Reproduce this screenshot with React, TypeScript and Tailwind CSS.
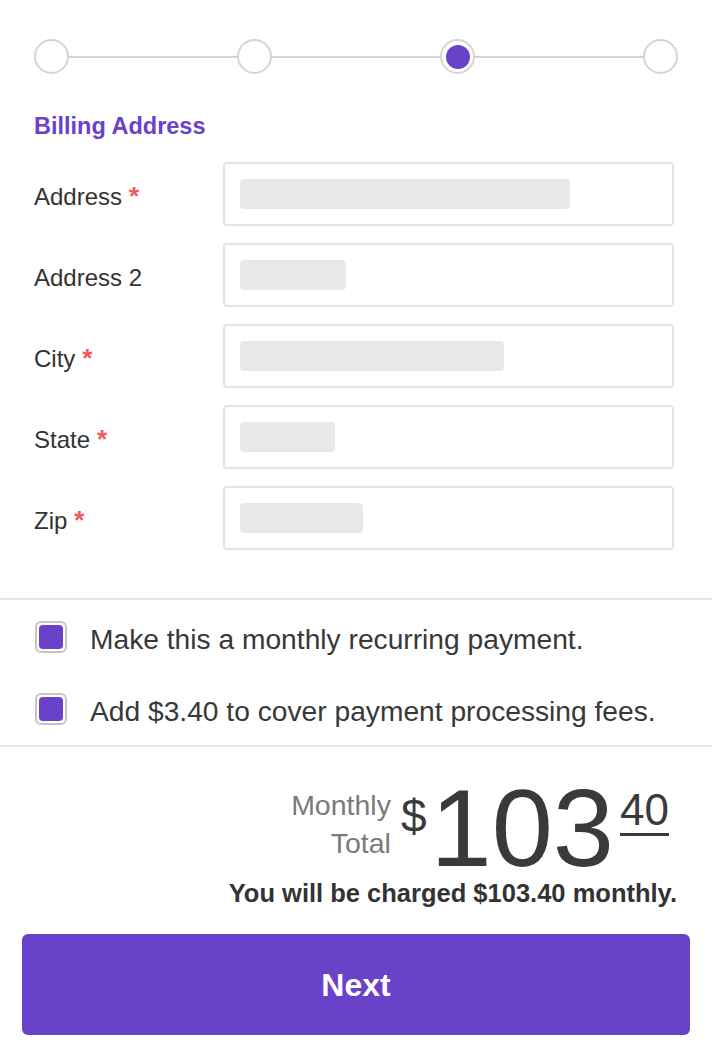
import React from 'react';

const fields = [
  { label: 'Address', required: true, bar: 'w-[330px]' },
  { label: 'Address 2', required: false, bar: 'w-[106px]' },
  { label: 'City', required: true, bar: 'w-[264px]' },
  { label: 'State', required: true, bar: 'w-[95px]' },
  { label: 'Zip', required: true, bar: 'w-[123px]' },
];

const options = [
  'Make this a monthly recurring payment.',
  'Add $3.40 to cover payment processing fees.',
];

function Step({ active }: { active?: boolean }) {
  return (
    <div className="w-[35px] h-[35px] rounded-full border-2 border-[#d4d4d4] flex items-center justify-center shrink-0 bg-white">
      {active && <div className="w-[24px] h-[24px] rounded-full bg-[#6a41c9]" />}
    </div>
  );
}

function Line() {
  return <div className="flex-1 h-[2px] bg-[#d4d4d4]" />;
}

export default function App() {
  return (
    <div className="w-full min-h-[1059px] bg-white text-[#333] font-['Liberation_Sans',Arial,sans-serif]">
      {/* STEPPER */}
      <div className="pt-[39px] px-[34px] flex items-center">
        <Step />
        <Line />
        <Step />
        <Line />
        <Step active />
        <Line />
        <Step />
      </div>

      {/* BILLING ADDRESS FORM */}
      <div className="pl-[34px] pr-[38px]">
        <h2 className="mt-[38px] text-[23.5px] leading-[28px] font-bold text-[#6a41c9]">Billing Address</h2>
        <div className="mt-[22px] flex flex-col gap-[17px]">
          {fields.map((f) => (
            <div key={f.label} className="flex items-center">
              <div className="w-[189px] shrink-0 mt-[6px] text-[24px] leading-[30px] flex items-start">
                <span>{f.label}</span>
                {f.required && (
                  <span className="ml-[7px] mt-[2px] text-[26px] leading-[24px] font-bold text-[#ef5a5c]">*</span>
                )}
              </div>
              <div className="flex-1 h-[64px] border-2 border-[#e4e4e4] rounded-[4px] flex items-center pl-[15px]">
                <div className={`${f.bar} h-[30px] rounded-[4px] bg-[#e8e8e8]`} />
              </div>
            </div>
          ))}
        </div>
      </div>

      {/* OPTIONS */}
      <div className="mt-[48px] border-t-2 border-b-2 border-[#e6e6e6] pt-[1px]">
        {options.map((o) => (
          <div key={o} className="h-[72px] flex items-center pl-[35px]">
            <div className="w-[32px] h-[32px] shrink-0 rounded-[6px] border-2 border-[#c6c6c6] p-[2px]">
              <div className="w-full h-full rounded-[4px] bg-[#6a41c9]" />
            </div>
            <span className="ml-[23px] mt-[4px] text-[28.2px] leading-[34px] text-[#383838]">{o}</span>
          </div>
        ))}
      </div>

      {/* TOTAL */}
      <div className="pt-[35px] flex flex-col items-end">
        <div className="flex items-start pr-[43px]">
          <div className="mt-[4px] text-right text-[28.5px] leading-[38px] text-[#7a7a7a]">
            <div>Monthly</div>
            <div>Total</div>
          </div>
          <span className="ml-[10px] mt-[11px] text-[46px] leading-none text-[#3a3a3a]">$</span>
          <span className="ml-[4px] text-[110px] leading-[92px] text-[#3a3a3a]">103</span>
          <span className="ml-[6px] mt-[6px] text-[44px] leading-none text-[#3a3a3a] border-b-[3px] border-[#3a3a3a] pb-[1px]">
            40
          </span>
        </div>
        <p className="mt-[4px] pr-[35px] text-[25.5px] leading-[30px] font-bold text-[#333]">
          You will be charged $103.40 monthly.
        </p>
      </div>

      {/* NEXT */}
      <div className="px-[22px] mt-[26px] pb-[24px]">
        <button className="w-full h-[101px] rounded-[6px] bg-[#6a41c9] text-white text-[32px] font-bold">
          Next
        </button>
      </div>
    </div>
  );
}
